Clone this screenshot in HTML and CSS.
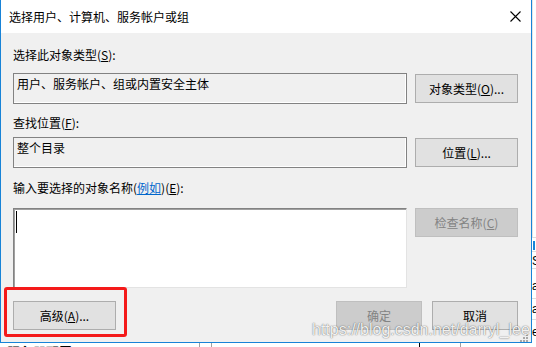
FILE: index.html
```html
<!DOCTYPE html>
<html lang="zh-CN">
<head>
<meta charset="utf-8">
<title>选择用户、计算机、服务帐户或组</title>
<link rel="stylesheet" href="styles.css">
</head>
<body>
<div class="screen">
  <div class="dialog">
    <div class="titlebar">
      <span class="title">选择用户、计算机、服务帐户或组</span>
      <svg class="close" width="11" height="11" viewBox="0 0 11 11"><path d="M0.5 0.5 L10.5 10.5 M10.5 0.5 L0.5 10.5" stroke="#000" stroke-width="1.1" fill="none"/></svg>
    </div>
    <div class="content">
      <div class="label">选择此对象类型(<u>S</u>):</div>
      <div class="row r1">
        <div class="field">用户、服务帐户、组或内置安全主体</div>
        <div class="btn">对象类型(<u>O</u>)...</div>
      </div>
      <div class="label l2">查找位置(<u>F</u>):</div>
      <div class="row r2">
        <div class="field">整个目录</div>
        <div class="btn">位置(<u>L</u>)...</div>
      </div>
      <div class="label l3">输入要选择的对象名称(<a class="link">例如</a>)(<u>E</u>):</div>
      <div class="row r3">
        <div class="input"><span class="caret"></span></div>
        <div class="btn disabled">检查名称(<u>C</u>)</div>
      </div>
      <div class="footer">
        <div class="btn">高级(<u>A</u>)...</div>
        <div class="spacer"></div>
        <div class="btn small disabled">确定</div>
        <div class="btn small">取消</div>
      </div>
    </div>
    <div class="grip">
      <i class="d d1"></i><i class="d d2"></i><i class="d d3"></i><i class="d d4"></i><i class="d d5"></i><i class="d d6"></i>
    </div>
  </div>
  <div class="side">
    <div class="s-row s0"></div>
    <div class="s-row s1"><span class="s-blue"></span></div>
    <div class="s-row s2">S</div>
    <div class="s-row s3">a</div>
    <div class="s-row s4">a</div>
    <div class="s-row s5">e</div>
  </div>
  <div class="bottom">
    <span class="b-text">服务器配置</span>
    <span class="b-cell c1"></span>
    <span class="b-cell c2"></span>
    <span class="b-cell c3"></span>
    <span class="b-cell c4"></span>
  </div>
  <div class="highlight"></div>
  <div class="watermark">https://blog.csdn.net/darryl_lee</div>
</div>
</body>
</html>
```
FILE: styles.css
```css
* { box-sizing: border-box; }
html, body { margin: 0; padding: 0; background: #fff; }
body { font-family: "Noto Sans CJK SC", "Liberation Sans", sans-serif; font-size: 12px; color: #000; }

.screen {
  position: relative;
  width: 536px;
  height: 347px;
  overflow: hidden;
  display: grid;
  grid-template-columns: 532px 4px;
  grid-template-rows: 343px 4px;
  background: #fff;
}

.dialog {
  position: relative;
  grid-column: 1;
  grid-row: 1;
  border: 1px solid #1883d7;
  border-top: 0;
  background: #f0f0f0;
  display: flex;
  flex-direction: column;
}

.titlebar {
  height: 33px;
  background: #fff;
  display: flex;
  align-items: center;
  padding: 1px 10px 0 8px;
}
.title { flex: 1; font-size: 12px; line-height: 14px; }
.close { display: block; margin-top: -1px; }

.content {
  flex: 1;
  padding: 15px 13px 0 12px;
  display: flex;
  flex-direction: column;
}

.label { line-height: 14px; height: 14px; white-space: nowrap; }
.l2 { margin-top: 12px; }
.l3 { margin-top: 13px; }
.link { color: #0066cc; text-decoration: underline; }

.row { display: flex; gap: 8px; align-items: flex-start; }
.r1 { margin-top: 11px; }
.r2 { margin-top: 7px; }
.r3 { margin-top: 13px; }

.field {
  width: 394px;
  height: 31px;
  border: 1px solid #828282;
  box-shadow: inset -1px -1px 0 #fff;
  padding: 3px 3px 0 3px;
  line-height: 14px;
}

.btn {
  width: 103px;
  height: 29px;
  margin-top: 1px;
  border: 1px solid #adadad;
  background: #e1e1e1;
  display: flex;
  align-items: center;
  justify-content: center;
  line-height: 14px;
  white-space: nowrap;
}
.btn.disabled { background: #cccccc; border-color: #bfbfbf; color: #838383; }
.r3 .btn { margin-top: 0; }
.btn.small { width: 86px; }

.input {
  width: 394px;
  height: 80px;
  background: #fff;
  border-top: 1px solid #828282;
  border-left: 1px solid #828282;
  border-right: 1px solid #e3e3e3;
  border-bottom: 1px solid #e3e3e3;
  box-shadow: inset 1px 1px 0 #a0a0a0;
  padding: 2px 0 0 2px;
}
.caret { display: block; width: 1px; height: 22px; background: #000; }

.footer { display: flex; margin-top: 13px; gap: 10px; }
.footer .btn { margin-top: 0; }
.spacer { flex: 1; }

.grip { position: absolute; right: 3px; bottom: 1px; width: 7px; height: 7px; }
.d { position: absolute; width: 2px; height: 2px; background: #a8a8a8; }
.d1 { right: 0; top: 0; }
.d2 { right: 0; top: 3px; }
.d3 { right: 3px; top: 3px; }
.d4 { right: 0; top: 6px; }
.d5 { right: 3px; top: 6px; }
.d6 { right: 6px; top: 6px; }

.side {
  grid-column: 2;
  grid-row: 1;
  display: flex;
  flex-direction: column;
  background: #fff;
  font-family: "Liberation Sans", sans-serif;
  font-size: 12px;
  overflow: hidden;
}
.s-row { border-bottom: 1px solid #dcdcdc; line-height: 14px; overflow: hidden; white-space: nowrap; }
.s0 { height: 238px; border-left: 1px solid #e5e5e5; }
.s1 { height: 14px; }
.s-blue { display: block; width: 2px; height: 9px; margin: 3px 0 0 1px; background: #1883d7; }
.s2 { height: 17px; padding-top: 2px; }
.s3 { height: 30px; padding-top: 10px; }
.s4 { height: 21px; padding-top: 3px; }
.s5 { flex: 1; padding-top: 5px; border-bottom: 0; }

.bottom {
  grid-column: 1 / span 2;
  grid-row: 2;
  position: relative;
  overflow: hidden;
  background: #fff;
  display: flex;
  align-items: flex-start;
}
.b-text { margin: 1px 0 0 7px; font-size: 13px; line-height: 16px; font-weight: bold; white-space: nowrap; }
.b-cell { height: 4px; border-left: 1px solid #a0a0a0; }
.c1 { margin-left: 127px; width: 12px; }
.c2 { width: 13px; }
.c3 { margin-left: 195px; width: 1px; border-left-color: #000; }
.c4 { margin-left: 40px; width: 1px; }

.highlight {
  position: absolute;
  left: 4px;
  top: 287px;
  width: 123px;
  height: 50px;
  border: 3px solid #f41a1a;
  border-radius: 3px;
}

.watermark {
  position: absolute;
  left: 312px;
  top: 322px;
  font-family: "Liberation Sans", sans-serif;
  font-size: 16px;
  line-height: 16px;
  color: rgba(255, 255, 255, 0.92);
  text-shadow: 0 0 1px rgba(0, 0, 0, 0.55), 0 0 2px rgba(0, 0, 0, 0.25);
  white-space: nowrap;
}
```
